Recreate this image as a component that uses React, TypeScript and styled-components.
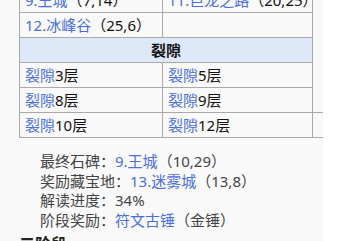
import React from 'react'
import styled, { createGlobalStyle } from 'styled-components'

const GlobalStyle = createGlobalStyle`
  html, body {
    margin: 0;
    padding: 0;
    background: #fff;
  }
  body {
    font-family: 'Noto Sans', 'Noto Sans CJK SC', sans-serif;
    font-size: 15px;
    overflow: hidden;
  }
`;

const Page = styled.div`
  width: 323px;
  height: 241px;
  background: #f9f9f9;
  overflow: hidden;
  display: flex;
  flex-direction: column;
`;

const Table = styled.table`
  flex: none;
  margin: -13px 0 0 19px;
  border-collapse: collapse;
  table-layout: fixed;
  width: 304px;
  font-size: 15px;
  color: #111;

  & td, & th {
    border: 1px solid #a9a9a9;
    height: 25px;
    box-sizing: border-box;
    padding: 0 5px;
    line-height: 20px;
    background: #f9f9f9;
    white-space: nowrap;
    overflow: hidden;
  }

  & td.spacer {
    padding: 0;
  }
`;

const Header = styled.th`
  && {
    background: #dde8f9;
  }
  font-weight: 700;
  font-size: 15px;
  text-align: center;
  color: #111;
`;

const Link = styled.span`
  color: #4a6fdc;
`;

const Info = styled.div`
  flex: none;
  padding: 14px 0 0 40px;
  color: #444;
  font-size: 15px;
`;

const InfoLine = styled.div`
  line-height: 19.7px;
  white-space: nowrap;
`;

const Section = styled.h3`
  flex: none;
  margin: 3px 0 0 19px;
  padding: 0;
  font-size: 16px;
  font-weight: 700;
  color: #222;
  line-height: 20px;
`;

type Place = { name: string; coord: string }

const Cell = ({ p }: { p: Place }) => (
  <>
    <Link>{p.name}</Link>（{p.coord}）
  </>
)

const Rift = ({ n }: { n: number }) => (
  <>
    <Link>裂隙</Link>{n}层
  </>
)

export default function App() {
  return (
    <Page>
      <GlobalStyle />
      <Table>
        <colgroup>
          <col style={{ width: 143 }} />
          <col style={{ width: 150 }} />
          <col style={{ width: 11 }} />
        </colgroup>
        <tbody>
          <tr>
            <td><Cell p={{ name: '9.王城', coord: '7,14' }} /></td>
            <td><Cell p={{ name: '11.巨龙之路', coord: '20,25' }} /></td>
          </tr>
          <tr>
            <td><Cell p={{ name: '12.冰峰谷', coord: '25,6' }} /></td>
            <td></td>
          </tr>
          <tr>
            <Header colSpan={2}>裂隙</Header>
          </tr>
          <tr>
            <td><Rift n={3} /></td>
            <td><Rift n={5} /></td>
          </tr>
          <tr>
            <td><Rift n={8} /></td>
            <td><Rift n={9} /></td>
          </tr>
          <tr>
            <td><Rift n={10} /></td>
            <td><Rift n={12} /></td>
            <td className="spacer"></td>
          </tr>
        </tbody>
      </Table>
      <Info>
        <InfoLine>最终石碑：<Link>9.王城</Link>（10,29）</InfoLine>
        <InfoLine>奖励藏宝地：<Link>13.迷雾城</Link>（13,8）</InfoLine>
        <InfoLine>解读进度：34%</InfoLine>
        <InfoLine>阶段奖励：<Link>符文古锤</Link>（金锤）</InfoLine>
      </Info>
      <Section>二阶段</Section>
    </Page>
  )
}
